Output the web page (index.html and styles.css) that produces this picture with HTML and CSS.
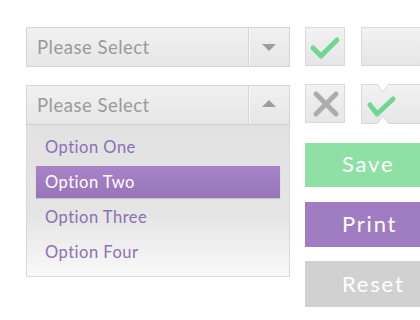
FILE: index.html
```html
<!DOCTYPE html>
<html>
<head>
<meta charset="utf-8">
<link rel="stylesheet" href="styles.css">
</head>
<body>
<div class="page">
  <div class="left">
    <div class="select">
      <div class="select-label">Please Select</div>
      <div class="select-btn"><span class="arrow-down"></span></div>
    </div>
    <div class="dropdown">
      <div class="select open">
        <div class="select-label">Please Select</div>
        <div class="select-btn"><span class="arrow-up"></span></div>
      </div>
      <div class="list">
        <div class="option">Option One</div>
        <div class="option active">Option Two</div>
        <div class="option">Option Three</div>
        <div class="option">Option Four</div>
      </div>
    </div>
  </div>
  <div class="right">
    <div class="row">
      <div class="check">
        <svg width="40" height="39" viewBox="0 0 40 39"><polyline points="8,21 16,29 32,13" fill="none" stroke="#6fd693" stroke-width="5" stroke-linecap="round" stroke-linejoin="round"/></svg>
      </div>
      <div class="wide"></div>
    </div>
    <div class="row row2">
      <div class="check">
        <svg width="40" height="39" viewBox="0 0 40 39"><path d="M11 10 L31 30 M31 10 L11 30" fill="none" stroke="#adadad" stroke-width="5" stroke-linecap="round"/></svg>
      </div>
      <div class="notched">
        <svg width="60" height="40" viewBox="0 0 60 40">
          <defs>
            <linearGradient id="g" x1="0" y1="0" x2="0" y2="1">
              <stop offset="0" stop-color="#f2f2f2"/>
              <stop offset="1" stop-color="#e6e6e6"/>
            </linearGradient>
          </defs>
          <path d="M0.5 0.5 H16.5 L22 8 L27.5 0.5 H60 V39.5 H27.5 L22 32 L16.5 39.5 H0.5 Z" fill="url(#g)" stroke="#d8d8d8" stroke-width="1"/>
          <polyline points="9,21 16,30 32,15" fill="none" stroke="#6fd693" stroke-width="5" stroke-linecap="round" stroke-linejoin="round"/>
        </svg>
      </div>
    </div>
    <div class="btn save">Save</div>
    <div class="btn print">Print</div>
    <div class="btn reset">Reset</div>
  </div>
</div>
</body>
</html>
```
FILE: styles.css
```css
html, body {
  margin: 0;
  padding: 0;
  background: #ffffff;
  overflow: hidden;
}
body {
  width: 420px;
  height: 320px;
  font-family: "Lato", "Open Sans", sans-serif;
}
.page {
  display: flex;
  padding: 27px 0 0 26px;
  gap: 15px;
}
.left {
  flex: 0 0 264px;
  display: flex;
  flex-direction: column;
  gap: 18px;
}
.select {
  box-sizing: border-box;
  height: 40px;
  display: flex;
  border: 1px solid #d5d5d5;
  background: linear-gradient(#f1f1f1, #e6e6e6);
}
.select-label {
  flex: 1;
  padding-left: 10px;
  font-size: 18.5px;
  color: #9a9a9a;
  line-height: 38px;
  letter-spacing: 0.5px;
  border-right: 1px solid #d6d6d6;
  box-shadow: 1px 0 0 #f8f8f8;
}
.select-btn {
  flex: 0 0 40px;
  display: flex;
  align-items: center;
  justify-content: center;
}
.arrow-down {
  width: 0;
  height: 0;
  border-left: 7px solid transparent;
  border-right: 7px solid transparent;
  border-top: 7px solid #9d9d9d;
  margin-top: 1px;
}
.arrow-up {
  width: 0;
  height: 0;
  border-left: 7px solid transparent;
  border-right: 7px solid transparent;
  border-bottom: 7px solid #9d9d9d;
  margin-top: -3px;
}
.dropdown {
  display: flex;
  flex-direction: column;
}
.select.open {
  border-bottom-color: #cfcfcf;
}
.list {
  box-sizing: border-box;
  height: 152px;
  border: 1px solid #d8d8d8;
  border-top: none;
  background: linear-gradient(#e2e2e2 0%, #e5e5e5 60%, #f9f9f9 100%);
  padding: 6px 9px 0 9px;
  display: flex;
  flex-direction: column;
  gap: 3px;
}
.option {
  height: 32px;
  line-height: 32px;
  padding-left: 9px;
  font-size: 16.5px;
  letter-spacing: 0.5px;
  color: #8c70b3;
}
.option.active {
  background: linear-gradient(#a883c7, #9874b9);
  color: #ffffff;
  box-shadow: 0 1px 1px rgba(0,0,0,0.12);
}
.right {
  flex: 0 0 auto;
  width: 130px;
  display: flex;
  flex-direction: column;
}
.row {
  display: flex;
  gap: 16px;
  height: 39px;
}
.row2 {
  margin-top: 18px;
  height: 40px;
}
.check {
  box-sizing: border-box;
  flex: 0 0 40px;
  height: 39px;
  border: 1px solid #d9d9d9;
  background: linear-gradient(#f2f2f2, #e6e6e6);
  position: relative;
}
.check svg {
  position: absolute;
  left: -1px;
  top: -1px;
}
.wide {
  box-sizing: border-box;
  flex: 0 0 70px;
  height: 39px;
  border: 1px solid #d9d9d9;
  background: linear-gradient(#f2f2f2, #e6e6e6);
}
.notched {
  flex: 0 0 60px;
  height: 40px;
}
.notched svg {
  display: block;
}
.btn {
  width: 130px;
  box-sizing: border-box;
  padding-left: 37px;
  color: #ffffff;
  font-size: 22px;
  letter-spacing: 1.8px;
}
.save {
  margin-top: 19px;
  height: 44px;
  line-height: 42px;
  background: #8fe0a5;
}
.print {
  margin-top: 15px;
  height: 45px;
  line-height: 44px;
  background: #a07cc2;
}
.reset {
  margin-top: 14px;
  height: 46px;
  line-height: 45px;
  background: #d1d1d1;
}
```
